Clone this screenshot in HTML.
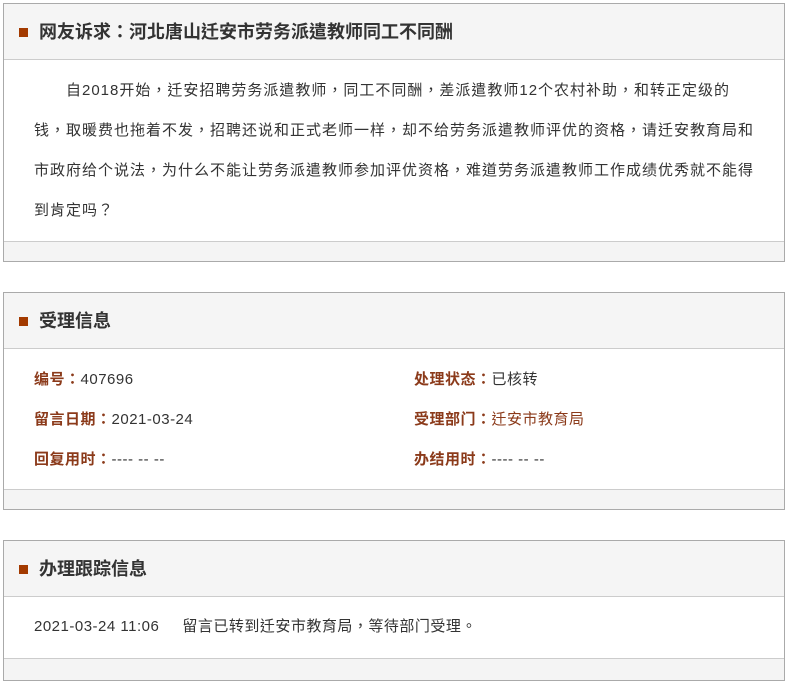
<!DOCTYPE html>
<html><head><meta charset="utf-8"><style>
*{margin:0;padding:0;box-sizing:border-box}
body{width:788px;height:683px;background:#fff;font-family:"Liberation Sans","Noto Sans CJK TC",sans-serif;color:#333;position:relative;overflow:hidden}
.box{position:absolute;left:3px;width:782px;border:1px solid #aaa;background:#fff}
.hd{height:56px;background:#f5f5f5;border-bottom:1px solid #ccc;position:relative;font-size:18px;font-weight:bold;color:#333;line-height:55px;padding-left:35px;font-family:"Noto Sans CJK TC",sans-serif}
.hd:before{content:"";position:absolute;left:15px;top:24px;width:9px;height:9px;background:#a33a00}
.ft{background:#f4f4f4;border-top:1px solid #ccc}
.txt{font-size:15px;line-height:40px;padding:11px 26px 4px 30px;text-indent:32px;color:#333;letter-spacing:1px}
.info{position:relative;font-size:15px}
.info div{position:absolute;line-height:20px;letter-spacing:0.5px}
.l{color:#8b3a1a;font-weight:bold}
.red{color:#8b3a1a}
</style></head><body>
<div class="box" style="top:3px;height:259px">
<div class="hd">网友诉求：河北唐山迁安市劳务派遣教师同工不同酬</div>
<div class="txt" style="height:181px">自2018开始，迁安招聘劳务派遣教师，同工不同酬，差派遣教师12个农村补助，和转正定级的钱，取暖费也拖着不发，招聘还说和正式老师一样，却不给劳务派遣教师评优的资格，请迁安教育局和市政府给个说法，为什么不能让劳务派遣教师参加评优资格，难道劳务派遣教师工作成绩优秀就不能得到肯定吗？</div>
<div class="ft" style="height:20px"></div>
</div>
<div class="box" style="top:292px;height:218px">
<div class="hd">受理信息</div>
<div class="info" style="height:140px">
<div style="left:30px;top:21px"><span class="l">编号：</span>407696</div>
<div style="left:30px;top:61px"><span class="l">留言日期：</span>2021-03-24</div>
<div style="left:30px;top:101px"><span class="l">回复用时：</span>---- -- --</div>
<div style="left:410px;top:21px"><span class="l">处理状态：</span>已核转</div>
<div style="left:410px;top:61px"><span class="l">受理部门：</span><span class="red">迁安市教育局</span></div>
<div style="left:410px;top:101px"><span class="l">办结用时：</span>---- -- --</div>
</div>
<div class="ft" style="height:20px"></div>
</div>
<div class="box" style="top:540px;height:141px">
<div class="hd">办理跟踪信息</div>
<div class="info" style="height:61px">
<div style="left:30px;top:20px">2021-03-24 11:06<span style="display:inline-block;width:23px"></span>留言已转到迁安市教育局，等待部门受理。</div>
</div>
<div class="ft" style="height:22px"></div>
</div>
</body></html>
